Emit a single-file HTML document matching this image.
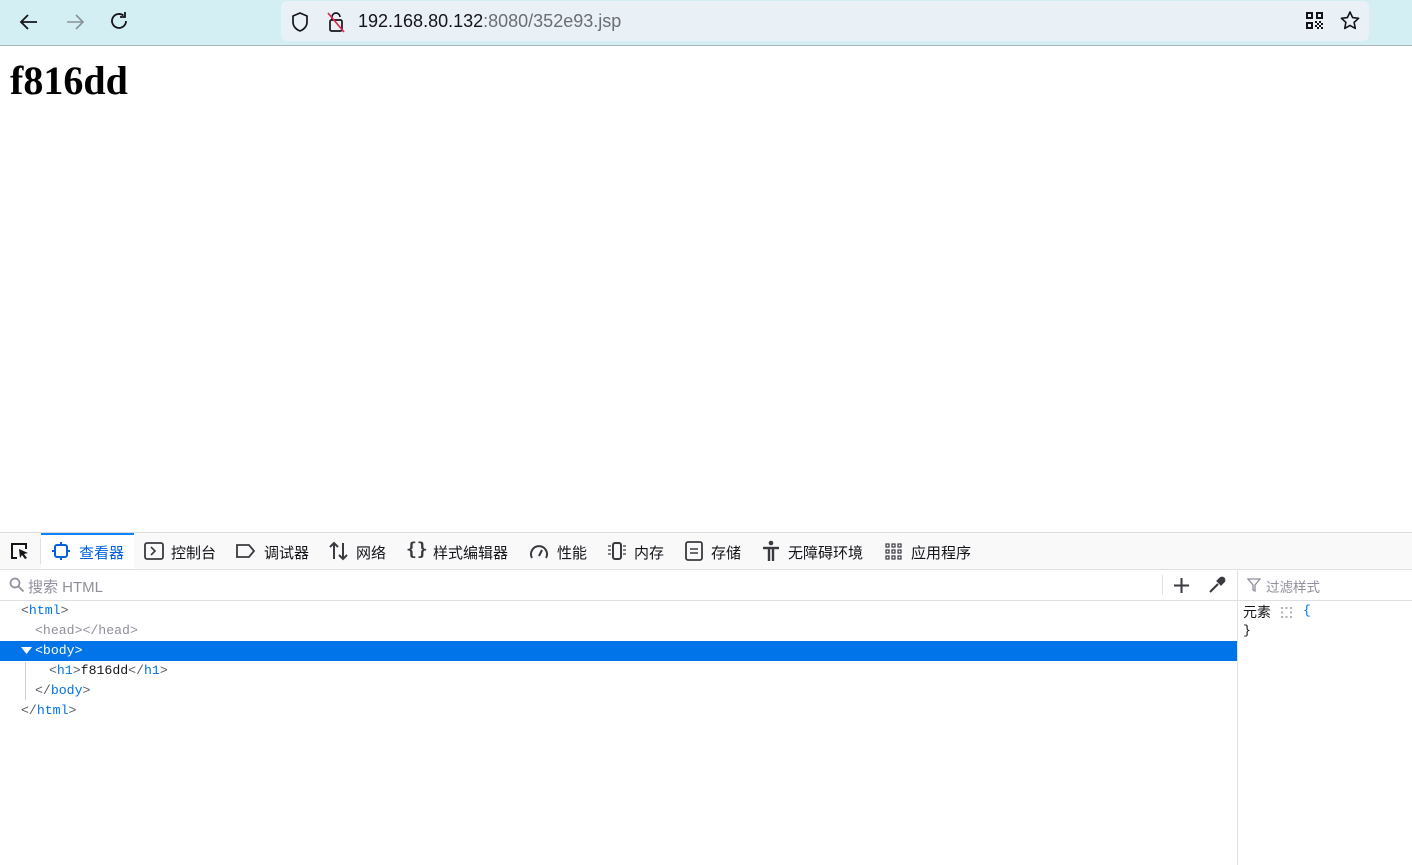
<!DOCTYPE html>
<html><head><meta charset="utf-8"><style>
*{margin:0;padding:0;box-sizing:border-box}
body{width:1412px;height:865px;overflow:hidden;background:#fff;font-family:"Liberation Sans","Noto Sans CJK SC",sans-serif;position:relative}
.a{position:absolute}
.nav{left:0;top:0;width:1412px;height:46px;background:#d4eff4;border-bottom:1px solid #a9b6ba}
.url{left:281px;top:1px;width:1088px;height:40px;background:#e9f0f6;border-radius:6px}
.t{font-size:15px;color:#15141a;white-space:nowrap}
.dt{left:0;top:532px;width:1412px;height:333px;border-top:1px solid #dcdcdf}
.tb{left:0;top:533px;width:1412px;height:37px;background:#f9f9fa;border-bottom:1px solid #e0e0e2}
.mono{font-family:"Liberation Mono","DejaVu Sans Mono",monospace;font-size:13.2px;white-space:nowrap}
.tg{color:#0074e8}.br{color:#5b5b66}
svg{position:absolute}
</style></head><body>
<div class="a nav"></div>
<svg style="left:18px;top:11px" width="22" height="22" viewBox="0 0 22 22"><path d="M19 11H4M10 4L3 11l7 7" fill="none" stroke="#15141a" stroke-width="1.8"/></svg>
<svg style="left:64px;top:11px" width="22" height="22" viewBox="0 0 22 22"><path d="M3 11h15M12 4l7 7-7 7" fill="none" stroke="#8a9296" stroke-width="1.6"/></svg>
<svg style="left:109px;top:10px" width="22" height="22" viewBox="0 0 22 22"><path d="M17 11a7 7 0 1 1-2.5-5.4" fill="none" stroke="#15141a" stroke-width="1.8"/><path d="M16 2v5h-5" fill="none" stroke="#15141a" stroke-width="1.8"/></svg>
<div class="a url"></div>
<svg style="left:290px;top:11px" width="20" height="22" viewBox="0 0 20 22"><path d="M10 2l7 3v6c0 5-4 8-7 9-3-1-7-4-7-9V5z" fill="none" stroke="#15141a" stroke-width="1.7"/></svg>
<svg style="left:325px;top:10px" width="22" height="24" viewBox="0 0 22 24"><rect x="5" y="10" width="12" height="11" rx="1.5" fill="none" stroke="#15141a" stroke-width="1.7"/><path d="M7 10V7a4 4 0 0 1 8 0" fill="none" stroke="#15141a" stroke-width="1.7"/><path d="M3 3l16 19" stroke="#e22850" stroke-width="1.7"/></svg>
<div class="a" style="left:358px;top:11px;font-size:18px;color:#15141a">192.168.80.132<span style="color:#6b6e74">:8080/352e93.jsp</span></div>
<svg style="left:1306px;top:12px" width="18" height="18" viewBox="0 0 18 18" fill="#15141a"><rect x="0" y="0" width="7" height="7"/><rect x="2" y="2" width="3" height="3" fill="#e9f0f6"/><rect x="10" y="0" width="7" height="7"/><rect x="12" y="2" width="3" height="3" fill="#e9f0f6"/><rect x="0" y="10" width="7" height="7"/><rect x="2" y="12" width="3" height="3" fill="#e9f0f6"/><rect x="9" y="9" width="2" height="2"/><rect x="13" y="9" width="2" height="2"/><rect x="11" y="11" width="2" height="2"/><rect x="15" y="11" width="2" height="2"/><rect x="9" y="13" width="2" height="2"/><rect x="13" y="13" width="2" height="2"/><rect x="11" y="15" width="2" height="2"/><rect x="15" y="15" width="2" height="2"/></svg>
<svg style="left:1339px;top:10px" width="22" height="22" viewBox="0 0 22 22"><path d="M11 2l2.6 5.6 6 .7-4.5 4.1 1.2 6L11 15.4 5.7 18.4l1.2-6L2.4 8.3l6-.7z" fill="none" stroke="#15141a" stroke-width="1.6" stroke-linejoin="round"/></svg>
<div class="a" style="left:10px;top:57px;font-family:'Liberation Serif',serif;font-weight:bold;font-size:40px;color:#000">f816dd</div>

<div class="a dt"></div>
<div class="a tb"></div>
<div class="a" style="left:41px;top:534px;width:93px;height:35px;background:#fff"></div>
<div class="a" style="left:41px;top:533px;width:93px;height:2px;background:#0a84ff"></div>
<div class="a" style="left:40px;top:538px;width:1px;height:26px;background:#e0e0e2"></div>
<svg style="left:9px;top:541px" width="22" height="20" viewBox="0 0 22 20"><path d="M8 17H3V3h14v5" fill="none" stroke="#15141a" stroke-width="2"/><path d="M10 8l9 4-4 1 3 4-2 1-3-4-2 3z" fill="#15141a"/></svg>
<svg style="left:51px;top:541px" width="20" height="20" viewBox="0 0 20 20"><rect x="4" y="4" width="12" height="12" rx="2" fill="none" stroke="#0060df" stroke-width="2"/><path d="M10 1v3M10 16v3M1 10h3M16 10h3" stroke="#0060df" stroke-width="2"/></svg>
<div class="a t" style="left:79px;top:542px;color:#0060df">查看器</div>
<svg style="left:144px;top:542px" width="20" height="18" viewBox="0 0 20 18"><rect x="1" y="1" width="18" height="16" rx="2" fill="none" stroke="#3a3a40" stroke-width="1.8"/><path d="M7 5l4 4-4 4" fill="none" stroke="#3a3a40" stroke-width="1.6"/></svg>
<div class="a t" style="left:171px;top:542px">控制台</div>
<svg style="left:235px;top:543px" width="22" height="16" viewBox="0 0 22 16"><path d="M2 2h12l5 6-5 6H2z" fill="none" stroke="#3a3a40" stroke-width="1.8"/></svg>
<div class="a t" style="left:264px;top:542px">调试器</div>
<svg style="left:328px;top:541px" width="22" height="20" viewBox="0 0 22 20"><path d="M6 18V2M2 6l4-4 4 4M15 2v16M11 14l4 4 4-4" fill="none" stroke="#3a3a40" stroke-width="2"/></svg>
<div class="a t" style="left:356px;top:542px">网络</div>
<div class="a" style="left:406px;top:539px;font-size:18px;font-weight:bold;color:#3a3a40;font-family:'DejaVu Sans Mono',monospace">{}</div>
<div class="a t" style="left:433px;top:542px">样式编辑器</div>
<svg style="left:528px;top:541px" width="22" height="20" viewBox="0 0 22 20"><path d="M4 17A8 8 0 1 1 18 17" fill="none" stroke="#3a3a40" stroke-width="2"/><path d="M11 15l3-6" stroke="#3a3a40" stroke-width="2"/></svg>
<div class="a t" style="left:557px;top:542px">性能</div>
<svg style="left:606px;top:541px" width="22" height="20" viewBox="0 0 22 20"><rect x="7" y="2" width="8" height="16" rx="2" fill="none" stroke="#3a3a40" stroke-width="2"/><path d="M2 5h3M2 9h3M2 13h3M17 5h3M17 9h3M17 13h3" stroke="#3a3a40" stroke-width="1.3"/></svg>
<div class="a t" style="left:634px;top:542px">内存</div>
<svg style="left:685px;top:541px" width="18" height="20" viewBox="0 0 18 20"><rect x="1" y="1" width="16" height="18" rx="2" fill="none" stroke="#3a3a40" stroke-width="1.8"/><path d="M5 8h8M5 12h8" stroke="#3a3a40" stroke-width="1.6"/></svg>
<div class="a t" style="left:711px;top:542px">存储</div>
<svg style="left:761px;top:540px" width="20" height="22" viewBox="0 0 20 22"><circle cx="10" cy="3" r="2.3" fill="#3a3a40"/><path d="M2 8h16" stroke="#3a3a40" stroke-width="2.4"/><path d="M8 8v13M12 8v13" stroke="#3a3a40" stroke-width="2.4"/></svg>
<div class="a t" style="left:788px;top:542px">无障碍环境</div>
<svg style="left:884px;top:542px" width="20" height="20" viewBox="0 0 20 20" fill="none" stroke="#3a3a40" stroke-width="1.2"><rect x="2" y="2" width="3" height="3"/><rect x="8" y="2" width="3" height="3"/><rect x="14" y="2" width="3" height="3"/><rect x="2" y="8" width="3" height="3"/><rect x="8" y="8" width="3" height="3"/><rect x="14" y="8" width="3" height="3"/><rect x="2" y="14" width="3" height="3"/><rect x="8" y="14" width="3" height="3"/><rect x="14" y="14" width="3" height="3"/></svg>
<div class="a t" style="left:911px;top:542px">应用程序</div>

<div class="a" style="left:0;top:600px;width:1237px;height:1px;background:#e0e0e2"></div>
<div class="a" style="left:1237px;top:570px;width:1px;height:295px;background:#e0e0e2"></div>
<div class="a" style="left:1238px;top:600px;width:174px;height:1px;background:#e0e0e2"></div>
<svg style="left:9px;top:577px" width="16" height="16" viewBox="0 0 16 16"><circle cx="6" cy="6" r="4.5" fill="none" stroke="#8f8f9d" stroke-width="1.7"/><path d="M9.5 9.5l5 5" stroke="#8f8f9d" stroke-width="1.8"/></svg>
<div class="a t" style="left:28px;top:576px;color:#8f8f9d">搜索 HTML</div>
<div class="a" style="left:1162px;top:575px;width:1px;height:20px;background:#e0e0e2"></div>
<svg style="left:1173px;top:577px" width="17" height="17" viewBox="0 0 17 17"><path d="M8.5 1v15M1 8.5h15" stroke="#3a3a40" stroke-width="2"/></svg>
<svg style="left:1208px;top:576px" width="18" height="18" viewBox="0 0 18 18"><path d="M2 16l8-8" stroke="#3a3a40" stroke-width="2"/><path d="M9 5l4 4M12 2a2 2 0 0 1 4 4l-3 3-4-4z" fill="#3a3a40" stroke="#3a3a40" stroke-width="1.2"/></svg>
<svg style="left:1247px;top:578px" width="14" height="14" viewBox="0 0 14 14"><path d="M1 1h12l-5 6v6l-2-1V7z" fill="none" stroke="#8f8f9d" stroke-width="1.3"/></svg>
<div class="a" style="left:1266px;top:576px;font-size:13.5px;color:#8f8f9d">过滤样式</div>

<div class="a mono" style="left:21px;top:601px;line-height:20px"><span class="br">&lt;</span><span class="tg">html</span><span class="br">&gt;</span></div>
<div class="a mono" style="left:35px;top:621px;line-height:20px;color:#8f8f9d">&lt;head&gt;&lt;/head&gt;</div>
<div class="a" style="left:0;top:641px;width:1237px;height:20px;background:#0074e8"></div>
<svg style="left:21px;top:647px" width="11" height="8" viewBox="0 0 11 8"><path d="M0 0h11L5.5 7z" fill="#fff"/></svg>
<div class="a mono" style="left:35px;top:641px;line-height:20px;color:#fff">&lt;body&gt;</div>
<div class="a" style="left:25px;top:662px;width:1px;height:38px;background:#d0d0d4"></div>
<div class="a mono" style="left:49px;top:661px;line-height:20px"><span class="br">&lt;</span><span class="tg">h1</span><span class="br">&gt;</span><span style="color:#15141a">f816dd</span><span class="br">&lt;/</span><span class="tg">h1</span><span class="br">&gt;</span></div>
<div class="a mono" style="left:35px;top:681px;line-height:20px"><span class="br">&lt;/</span><span class="tg">body</span><span class="br">&gt;</span></div>
<div class="a mono" style="left:21px;top:701px;line-height:20px"><span class="br">&lt;/</span><span class="tg">html</span><span class="br">&gt;</span></div>

<div class="a t" style="left:1243px;top:602px;font-size:14px">元素</div>
<svg style="left:1280px;top:606px" width="13" height="13" viewBox="0 0 13 13" fill="#b0b0b8"><rect x="1" y="1" width="2" height="2"/><rect x="5.5" y="1" width="2" height="2"/><rect x="10" y="1" width="2" height="2"/><rect x="1" y="5.5" width="2" height="2"/><rect x="10" y="5.5" width="2" height="2"/><rect x="1" y="10" width="2" height="2"/><rect x="5.5" y="10" width="2" height="2"/><rect x="10" y="10" width="2" height="2"/></svg>
<div class="a mono" style="left:1303px;top:603px;color:#0074e8">{</div>
<div class="a mono" style="left:1243px;top:623px;color:#15141a">}</div>
</body></html>
